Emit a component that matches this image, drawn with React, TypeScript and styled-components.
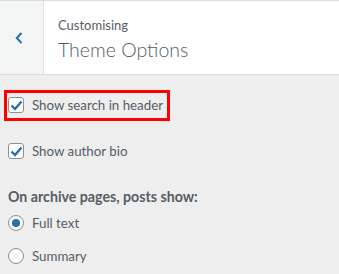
import { FC } from 'react';
import styled, { createGlobalStyle } from 'styled-components';

const GlobalStyle = createGlobalStyle`
  html, body {
    margin: 0;
    padding: 0;
    background: #eeeeee;
    font-family: Lato, "Noto Sans", sans-serif;
    color: #555d66;
  }
  * { box-sizing: border-box; }
`;

const Page = styled.div`
  width: 339px;
  height: 274px;
  overflow: hidden;
  background: #eeeeee;
`;

const Header = styled.div`
  display: flex;
  height: 75px;
  background: #fff;
  border-top: 1px solid #dddddd;
  border-bottom: 1px solid #dddddd;
`;

const BackButton = styled.button`
  width: 44px;
  border: 0;
  border-right: 1px solid #dddddd;
  background: #f4f5f5;
  display: flex;
  align-items: center;
  justify-content: center;
  padding: 0 6px 0 0;
  cursor: pointer;
`;

const Titles = styled.div`
  padding: 15px 0 0 14px;
  display: flex;
  flex-direction: column;
`;

const Crumb = styled.span`
  font-size: 13px;
  line-height: 18px;
`;

const Title = styled.h2`
  margin: 3px 0 0;
  font-size: 19.5px;
  line-height: 26px;
  font-weight: 300;
`;

const Controls = styled.div`
  padding: 15px 0 0 4px;
  display: flex;
  flex-direction: column;
  align-items: flex-start;
`;

const Row = styled.label<{ $highlight?: boolean }>`
  display: inline-flex;
  align-items: center;
  gap: 8px;
  padding: 4px 4px 5px 1px;
  border: 3px solid ${({ $highlight }) => ($highlight ? '#ff0000' : 'transparent')};
  margin-bottom: 15px;
  font-size: 13.3px;
  line-height: 16px;
`;

const Box = styled.span`
  width: 16px;
  height: 16px;
  border: 1px solid #8c8f94;
  border-radius: 3px;
  background: #fff;
  display: flex;
  align-items: center;
  justify-content: center;
`;

const Radio = styled.span<{ $on?: boolean }>`
  width: 16px;
  height: 16px;
  border: 1px solid #8c8f94;
  border-radius: 50%;
  background: #fff;
  display: flex;
  align-items: center;
  justify-content: center;
  &::after {
    content: '';
    width: 8px;
    height: 8px;
    border-radius: 50%;
    background: ${({ $on }) => ($on ? '#2271b1' : 'transparent')};
  }
`;

const GroupTitle = styled.div`
  margin: 5px 0 0 8px;
  font-size: 14.2px;
  line-height: 20px;
  font-weight: 700;
`;

const RadioList = styled.div`
  padding: 1px 0 0 4px;
  display: flex;
  flex-direction: column;
  align-items: flex-start;
`;

const RadioRow = styled(Row)`
  margin-bottom: 2px;
`;

const Check: FC = () => (
  <svg width="13" height="11" viewBox="0 0 13 11">
    <path d="M1.5 5.5 L5 9 L11.5 1.5" fill="none" stroke="#2271b1" strokeWidth="2.4" />
  </svg>
);

export default function App() {
  return (
    <Page>
      <GlobalStyle />
      <Header>
        <BackButton aria-label="Back">
          <svg width="8" height="12" viewBox="0 0 8 12">
            <path d="M6.5 1 L1.8 6 L6.5 11" fill="none" stroke="#2271b1" strokeWidth="2" />
          </svg>
        </BackButton>
        <Titles>
          <Crumb>Customising</Crumb>
          <Title>Theme Options</Title>
        </Titles>
      </Header>
      <Controls>
        <Row $highlight>
          <Box><Check /></Box>
          Show search in header
        </Row>
        <Row>
          <Box><Check /></Box>
          Show author bio
        </Row>
      </Controls>
      <GroupTitle>On archive pages, posts show:</GroupTitle>
      <RadioList>
        <RadioRow>
          <Radio $on />
          Full text
        </RadioRow>
        <RadioRow>
          <Radio />
          Summary
        </RadioRow>
      </RadioList>
    </Page>
  );
}
